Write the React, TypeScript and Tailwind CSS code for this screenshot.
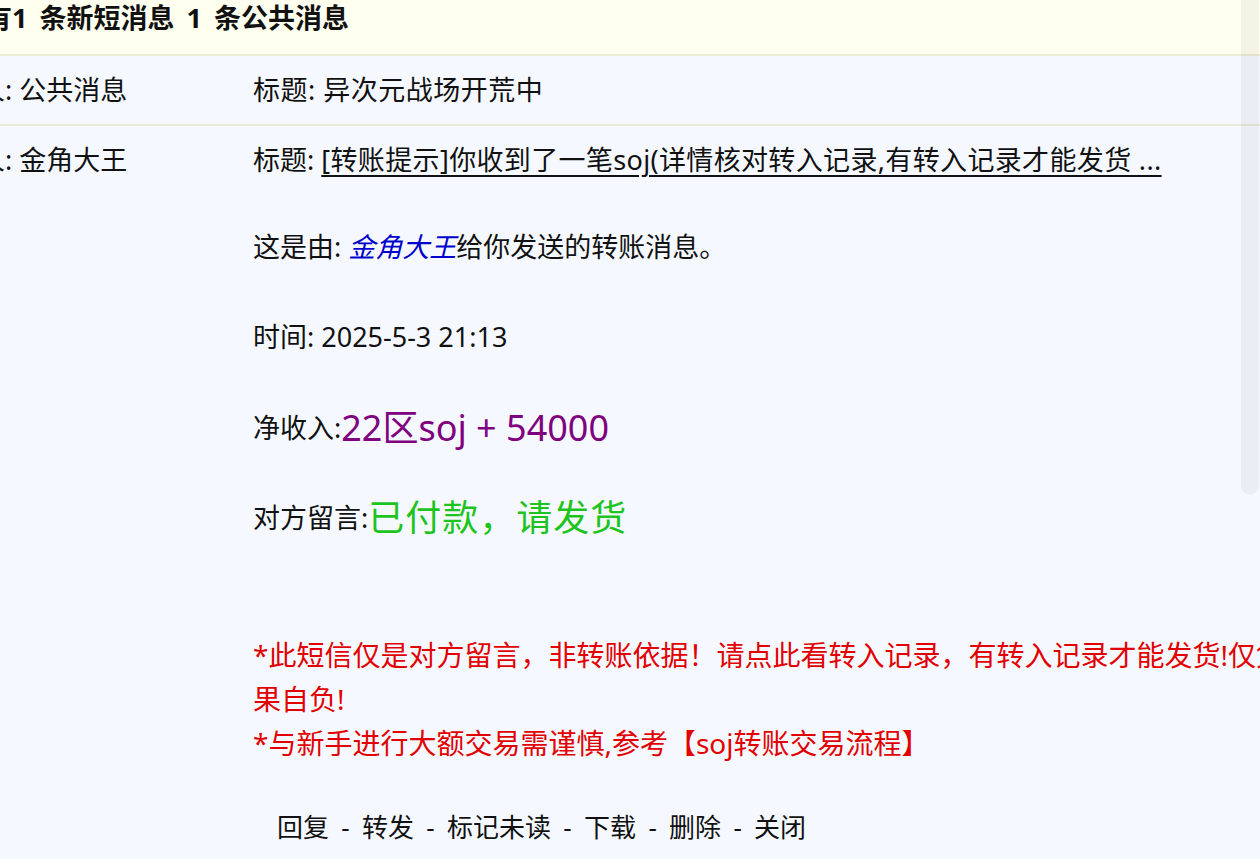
import React from "react";

const links = ["回复", "转发", "标记未读", "下载", "删除", "关闭"];

export default function App() {
  return (
    <div className="relative h-[859px] w-[1260px] overflow-hidden bg-[#f5f9ff] font-['Noto_Sans','Noto_Sans_CJK_SC',sans-serif] text-[#111]">
      {/* notice bar */}
      <div className="h-[56px] border-b-2 border-[#ebebd6] bg-[#fffff0]">
        <div className="ml-[-42px] whitespace-nowrap pt-[3px] text-[27px] font-bold leading-[30px] [word-spacing:5px]">
          您有1 条新短消息 1 条公共消息
        </div>
      </div>

      {/* public message row */}
      <div className="flex h-[70px] items-center border-b-2 border-[#e9ebd9] text-[27px]">
        <div className="ml-[-76px] w-[329px] shrink-0 whitespace-nowrap">发件人: 公共消息</div>
        <div className="whitespace-nowrap tracking-[0.5px]">标题: 异次元战场开荒中</div>
      </div>

      {/* opened message */}
      <div className="flex pt-[12px] text-[27px] leading-[44px]">
        <div className="ml-[-76px] w-[329px] shrink-0 whitespace-nowrap">发件人: 金角大王</div>
        <div className="min-w-0 flex-1">
          <div className="whitespace-nowrap">
            标题: <span className="underline underline-offset-[5px] tracking-[0.35px]">[转账提示]你收到了一笔soj(详情核对转入记录,有转入记录才能发货 ...</span>
          </div>
          <div className="mt-[43px] whitespace-nowrap">
            这是由: <span className="italic text-[#0000cc]">金角大王</span>给你发送的转账消息。
          </div>
          <div className="mt-[46px] whitespace-nowrap">时间: 2025-5-3 21:13</div>
          <div className="mt-[47px] flex h-[44px] items-center whitespace-nowrap">
            净收入:<span className="text-[36px] text-[#800080]">22区soj + 54000</span>
          </div>
          <div className="mt-[46px] flex h-[44px] items-center whitespace-nowrap">
            对方留言:<span className="text-[36px] text-[#1ec41e] [letter-spacing:1px]">已付款，请发货</span>
          </div>
          <div className="mt-[93px] text-[28px] text-[#e20000]">
            <div className="whitespace-nowrap">*此短信仅是对方留言，非转账依据！请点此看转入记录，有转入记录才能发货!仅凭短信发货后</div>
            <div className="whitespace-nowrap">果自负!</div>
            <div className="whitespace-nowrap">*与新手进行大额交易需谨慎,参考【soj转账交易流程】</div>
          </div>
          <div className="mt-[40px] flex items-center whitespace-nowrap pl-[24px] text-[26px]">
            {links.map((l, i) => (
              <React.Fragment key={l}>
                {i > 0 && <span className="w-[33px] text-center">-</span>}
                <span>{l}</span>
              </React.Fragment>
            ))}
          </div>
        </div>
      </div>

      {/* scrollbar thumb */}
      <div className="pointer-events-none absolute right-[1px] top-0 h-[495px] w-[18px] rounded-b-[9px] bg-black/[0.045]" />
    </div>
  );
}
